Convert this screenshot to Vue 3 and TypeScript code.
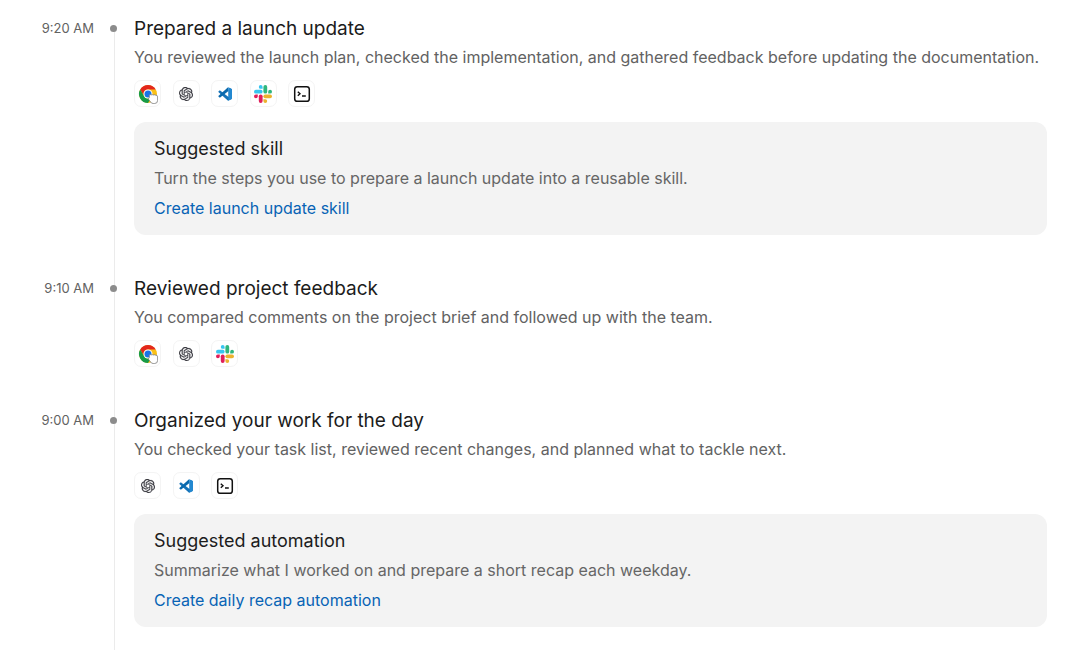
<script setup lang="ts">
type AppName = 'chrome' | 'openai' | 'vscode' | 'slack' | 'terminal'

interface Suggestion {
  title: string
  text: string
  action: string
}

interface Entry {
  time: string
  title: string
  text: string
  apps: AppName[]
  suggestion?: Suggestion
}

const labels: Record<AppName, string> = {
  chrome: 'Chrome',
  openai: 'ChatGPT',
  vscode: 'Visual Studio Code',
  slack: 'Slack',
  terminal: 'Terminal',
}

const entries: Entry[] = [
  {
    time: '9:20 AM',
    title: 'Prepared a launch update',
    text: 'You reviewed the launch plan, checked the implementation, and gathered feedback before updating the documentation.',
    apps: ['chrome', 'openai', 'vscode', 'slack', 'terminal'],
    suggestion: {
      title: 'Suggested skill',
      text: 'Turn the steps you use to prepare a launch update into a reusable skill.',
      action: 'Create launch update skill',
    },
  },
  {
    time: '9:10 AM',
    title: 'Reviewed project feedback',
    text: 'You compared comments on the project brief and followed up with the team.',
    apps: ['chrome', 'openai', 'slack'],
  },
  {
    time: '9:00 AM',
    title: 'Organized your work for the day',
    text: 'You checked your task list, reviewed recent changes, and planned what to tackle next.',
    apps: ['openai', 'vscode', 'terminal'],
    suggestion: {
      title: 'Suggested automation',
      text: 'Summarize what I worked on and prepare a short recap each weekday.',
      action: 'Create daily recap automation',
    },
  },
]
</script>

<template>
  <main class="timeline">
    <article v-for="entry in entries" :key="entry.time" class="entry">
      <time class="time">{{ entry.time }}</time>
      <div class="rail"><span class="dot"></span></div>
      <div class="content">
        <h2 class="title">{{ entry.title }}</h2>
        <p class="text">{{ entry.text }}</p>
        <ul class="apps">
          <li v-for="app in entry.apps" :key="app" class="app">
            <svg v-if="app === 'chrome'" class="icon-large" viewBox="0 0 20 20" role="img" :aria-label="labels[app]">
              <circle cx="10" cy="10" r="9" fill="#fbc116" />
              <path d="M2.2 5.5A9 9 0 0 1 17.8 5.5H10A4.5 4.5 0 0 0 6.1 12.2Z" fill="#e3271c" />
              <path d="M2.2 5.5A9 9 0 0 0 10 19L13.9 12.2A4.5 4.5 0 0 1 6.1 12.2Z" fill="#169b48" />
              <circle cx="10" cy="10" r="4.5" fill="#fff" />
              <circle cx="10" cy="10" r="3.5" fill="#1a73e8" />
              <path d="M11.3 11.2Q12 10.1 13.2 10.9 14.2 10.2 15.2 11 16.2 10.3 17.2 11.1 19.6 10.8 19.6 12.9V16.4Q19.6 19.5 16.7 19.5H15.2Q13.2 19.5 12.5 17.8L10.7 15.5Q10.2 14.2 11.3 13.8Z" fill="#fff" stroke="#7c7c7c" stroke-width=".8" />
            </svg>
            <svg v-else-if="app === 'openai'" class="icon-small" viewBox="0 0 24 24" role="img" :aria-label="labels[app]">
              <path fill="#3a3a40" stroke="#3a3a40" stroke-width=".4" d="M22.2819 9.8211a5.9847 5.9847 0 0 0-.5157-4.9108 6.0462 6.0462 0 0 0-6.5098-2.9A6.0651 6.0651 0 0 0 4.9807 4.1818a5.9847 5.9847 0 0 0-3.9977 2.9 6.0462 6.0462 0 0 0 .7427 7.0966 5.98 5.98 0 0 0 .511 4.9107 6.051 6.051 0 0 0 6.5146 2.9001A5.9847 5.9847 0 0 0 13.2599 24a6.0557 6.0557 0 0 0 5.7718-4.2058 5.9894 5.9894 0 0 0 3.9977-2.9001 6.0557 6.0557 0 0 0-.7475-7.0729zm-9.022 12.6081a4.4755 4.4755 0 0 1-2.8764-1.0408l.1419-.0804 4.7783-2.7582a.7948.7948 0 0 0 .3927-.6813v-6.7369l2.02 1.1686a.071.071 0 0 1 .038.052v5.5826a4.504 4.504 0 0 1-4.4945 4.4944zm-9.6607-4.1254a4.4708 4.4708 0 0 1-.5346-3.0137l.142.0852 4.783 2.7582a.7712.7712 0 0 0 .7806 0l5.8428-3.3685v2.3324a.0804.0804 0 0 1-.0332.0615L9.74 19.9502a4.4992 4.4992 0 0 1-6.1408-1.6464zM2.3408 7.8956a4.485 4.485 0 0 1 2.3655-1.9728V11.6a.7664.7664 0 0 0 .3879.6765l5.8144 3.3543-2.0201 1.1685a.0757.0757 0 0 1-.071 0l-4.8303-2.7865A4.504 4.504 0 0 1 2.3408 7.872zm16.5963 3.8558L13.1038 8.364 15.1192 7.2a.0757.0757 0 0 1 .071 0l4.8303 2.7913a4.4944 4.4944 0 0 1-.6765 8.1042v-5.6772a.79.79 0 0 0-.407-.667zm2.0107-3.0231l-.142-.0852-4.7735-2.7818a.7759.7759 0 0 0-.7854 0L9.409 9.2297V6.8974a.0662.0662 0 0 1 .0284-.0615l4.8303-2.7866a4.4992 4.4992 0 0 1 6.6802 4.66zM8.3065 12.863l-2.02-1.1638a.0804.0804 0 0 1-.038-.0567V6.0742a4.4992 4.4992 0 0 1 7.3757-3.4537l-.142.0805L8.704 5.459a.7948.7948 0 0 0-.3927.6813zm1.0976-2.3654l2.602-1.4998 2.6069 1.4998v2.9994l-2.5974 1.4997-2.6067-1.4997Z" />
            </svg>
            <svg v-else-if="app === 'vscode'" class="icon-small" viewBox="0 0 24 24" role="img" :aria-label="labels[app]">
              <path d="M17.2.6 22.8 3.2Q24 3.8 24 5V19Q24 20.2 22.8 20.8L17.2 23.4 1 8.8Q.3 8.1 1 7.4L2.4 6.1Q3 5.6 3.7 6.1L18 17V1Z" fill="#1673b8" />
              <path d="M17.2.6 1 15.2Q.3 15.9 1 16.6L2.4 17.9Q3 18.4 3.7 17.9L18 7Z" fill="#0a69ad" />
              <path d="M17.2.6 22.8 3.2Q24 3.8 24 5V19Q24 20.2 22.8 20.8L17.2 23.4Q18 22.8 18 21.8V2.2Q18 1.2 17.2.6Z" fill="#2388d0" />
            </svg>
            <svg v-else-if="app === 'slack'" class="icon-large" viewBox="0 0 20 20" role="img" :aria-label="labels[app]">
              <g fill="#36c5f0">
                <path d="M7.7 1A1.9 1.9 0 0 0 7.7 4.8H9.6V2.9A1.9 1.9 0 0 0 7.7 1Z" />
                <rect x="1" y="5.8" width="8.6" height="3.8" rx="1.9" />
              </g>
              <g fill="#2eb67d">
                <path d="M19 7.7A1.9 1.9 0 0 0 15.2 7.7V9.6H17.1A1.9 1.9 0 0 0 19 7.7Z" />
                <rect x="10.4" y="1" width="3.8" height="8.6" rx="1.9" />
              </g>
              <g fill="#ecb22e">
                <path d="M12.3 19A1.9 1.9 0 0 0 12.3 15.2H10.4V17.1A1.9 1.9 0 0 0 12.3 19Z" />
                <rect x="10.4" y="10.4" width="8.6" height="3.8" rx="1.9" />
              </g>
              <g fill="#e01e5a">
                <path d="M1 12.3A1.9 1.9 0 0 0 4.8 12.3V10.4H2.9A1.9 1.9 0 0 0 1 12.3Z" />
                <rect x="5.8" y="10.4" width="3.8" height="8.6" rx="1.9" />
              </g>
            </svg>
            <svg v-else class="icon-large" viewBox="0 0 20 20" role="img" :aria-label="labels[app]">
              <rect x="2.7" y="2.7" width="14.6" height="14.6" rx="2.6" fill="none" stroke="#111" stroke-width="1.5" />
              <path d="M5.8 7.8 8 9.8 5.8 11.8M10 12H13.8" fill="none" stroke="#111" stroke-width="1.4" />
            </svg>
          </li>
        </ul>
        <section v-if="entry.suggestion" class="card">
          <h3 class="card-title">{{ entry.suggestion.title }}</h3>
          <p class="card-text">{{ entry.suggestion.text }}</p>
          <a class="card-link" href="#">{{ entry.suggestion.action }}</a>
        </section>
      </div>
    </article>
  </main>
</template>

<style>
body {
  margin: 0;
  background: #fff;
}
</style>

<style scoped>
.timeline {
  height: 100vh;
  box-sizing: border-box;
  padding: 14px 19px 0 0;
  overflow: hidden;
  display: flex;
  flex-direction: column;
  font-family: Inter, "Liberation Sans", sans-serif;
  color: #1c1c1c;
}
.entry {
  flex: none;
  display: grid;
  grid-template-columns: 94px 40px minmax(0, 1fr);
}
.time {
  text-align: right;
  font-size: 13px;
  line-height: 29px;
  color: #626262;
}
.rail {
  display: flex;
  justify-content: center;
  align-items: flex-start;
  background: linear-gradient(#ebebeb, #ebebeb) 20px 0 / 1px 100% no-repeat;
}
.entry:first-child .rail {
  background-position: 20px 14px;
}
.dot {
  width: 7px;
  height: 7px;
  margin-top: 11px;
  margin-right: 1px;
  border-radius: 50%;
  background: #8c8c8c;
}
.content {
  padding-bottom: 39px;
}
.title,
.card-title {
  margin: 0;
  font-size: 19px;
  font-weight: 400;
  line-height: 30px;
}
.card-title {
  font-size: 18px;
}
.text {
  margin: 0;
  font-size: 16px;
  line-height: 26px;
  color: #626262;
}
.apps {
  list-style: none;
  display: grid;
  grid-template-columns: repeat(5, 1fr);
  width: 193px;
  margin: 10px 0 0;
  padding: 0;
}
.app {
  width: 27px;
  height: 27px;
  box-sizing: border-box;
  border: 1px solid #f4f4f4;
  border-radius: 7px;
  display: flex;
  align-items: center;
  justify-content: center;
}
.icon-large {
  flex: none;
  width: 20px;
  height: 20px;
}
.icon-small {
  flex: none;
  width: 14px;
  height: 14px;
}
.card {
  margin-top: 15px;
  padding: 12px 20px;
  border-radius: 12px;
  background: #f3f3f3;
}
.card-text {
  margin: 0;
  font-size: 16px;
  line-height: 29px;
  color: #666;
}
.card-link {
  display: block;
  width: fit-content;
  font-size: 16px;
  line-height: 30px;
  color: #0863b5;
  text-decoration: none;
}
</style>
